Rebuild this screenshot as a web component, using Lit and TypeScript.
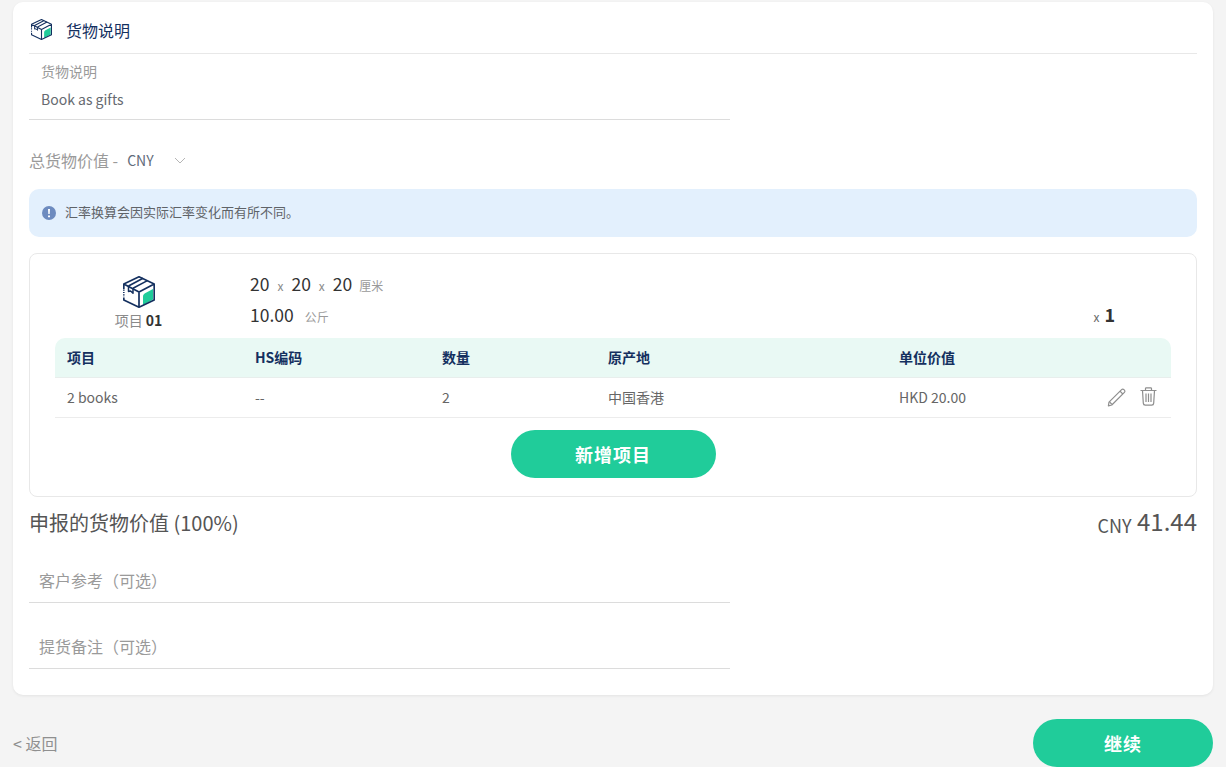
import { LitElement, html, css } from "lit";
import { customElement } from "lit/decorators.js";

const box = (size: number) => html`<svg width=${size} height=${size} viewBox="0 0 32 32" fill="none">
  <path d="M22 17.2 L30 13 V23.6 L20 29 V20.6 C20 19 20.6 18 22 17.2Z" fill="#20cc9a"/>
  <path d="M.8 13 V8 L16 .8 L31.2 8 V24 L16 31.2 L.8 24 V21.5 M.8 8 L16 16 L31.2 8 M16 16 V31.2" stroke="#14305f" stroke-width="1.7" stroke-linejoin="round"/>
  <path d="M5.5 10 L20 2.2 M10 12.2 L24.4 4.6" stroke="#14305f" stroke-width="1.6"/>
  <path d="M5.5 10 V15.4 L7.6 15 L10 17.2 V12.2" stroke="#14305f" stroke-width="1.5" stroke-linejoin="round"/>
  <path d="M.8 13.5 V21" stroke="#14305f" stroke-width="1.6" stroke-dasharray="1.2 1.2"/>
</svg>`;

@customElement("app-root")
export class AppRoot extends LitElement {
  static styles = css`
    :host {
      display: block;
      height: 767px;
      overflow: hidden;
      background: #f4f4f4;
      font-family: "Noto Sans CJK SC", "Noto Sans", sans-serif;
      color: #5c5c5c;
      padding: 2px 13px 0;
      box-sizing: border-box;
    }
    * { box-sizing: border-box; }
    .card {
      background: #fff;
      border-radius: 10px;
      height: 693px;
      padding: 0 16px;
      box-shadow: 0 1px 3px rgba(0,0,0,.07);
    }
    .head {
      height: 52px;
      border-bottom: 1px solid #e8e8e8;
      display: flex;
      align-items: center;
      padding: 4px 0 0 2px;
      color: #14305f;
      font-size: 16px;
      gap: 14px;
    }
    .desc {
      width: 701px;
      height: 66px;
      border-bottom: 1px solid #dcdcdc;
      padding: 8px 12px 0;
    }
    .desc .lbl { font-size: 14px; line-height: 19px; color: #9a9a9a; }
    .desc .val { font-size: 14px; line-height: 20px; margin-top: 8px; color: #666a70; }
    .total {
      height: 20px;
      margin-top: 30px;
      display: flex;
      align-items: center;
      font-size: 16px;
      color: #9a9a9a;
    }
    .total .cur { font-size: 14px; color: #5f6b7a; margin-left: 9px; width: 47px; }
    .info {
      margin-top: 19px;
      height: 48px;
      border-radius: 10px;
      background: #e3f0fd;
      display: flex;
      align-items: center;
      padding-left: 13px;
      gap: 9px;
      font-size: 13px;
      color: #5f6368;
    }
    .info span { padding-bottom: 4px; }
    .box {
      margin-top: 16px;
      height: 244px;
      border: 1px solid #e8e8e8;
      border-radius: 8px;
      padding: 0 25px;
    }
    .top { display: flex; height: 84px; }
    .itemcol {
      width: 167px;
      padding: 22px 0 0 0;
      display: flex;
      flex-direction: column;
      align-items: center;
      gap: 3px;
      font-size: 14px;
      line-height: 18px;
      color: #8a8a8a;
    }
    .itemcol b { color: #333; font-weight: 700; }
    .dims { margin-left: 28px; padding-top: 18px; flex: 1; color: #333; }
    .dimrow { display: flex; align-items: baseline; font-size: 17.5px; line-height: 24px; height: 24px; }
    .dimrow + .dimrow { margin-top: 7px; }
    .x { font-size: 12px; color: #8a8a8a; margin: 0 8px; }
    .unit { font-size: 12px; color: #9a9a9a; margin-left: 7px; }
    .dimrow.w .unit { margin-left: 11px; }
    .qty {
      align-self: flex-end;
      display: flex;
      align-items: baseline;
      margin-right: 56px;
      padding-bottom: 12px;
      font-size: 12px;
      color: #6a6a6a;
      gap: 5px;
    }
    .qty b { font-size: 18px; line-height: 24px; color: #333; font-weight: 700; }
    .row {
      display: grid;
      grid-template-columns: 188px 187px 166px 291px 1fr;
      align-items: center;
      padding-left: 12px;
      padding-bottom: 2px;
      font-size: 14px;
    }
    .thead {
      height: 40px;
      background: #e9f9f4;
      border-radius: 10px 10px 0 0;
      border-bottom: 1px solid #e8eeec;
      font-size: 14px;
      font-weight: 700;
      color: #14305f;
    }
    .tbody { height: 40px; border-bottom: 1px solid #ececec; color: #666; font-size: 14px; }
    .valcell { display: flex; justify-content: space-between; align-items: center; }
    .acts { display: flex; justify-content: flex-end; align-items: center; gap: 13px; padding-right: 14px; }
    .addwrap { display: flex; justify-content: center; margin-top: 12px; }
    .btn {
      background: #20cc9a;
      color: #fff;
      border-radius: 24px;
      height: 48px;
      display: flex;
      align-items: center;
      justify-content: center;
      font-weight: 700;
      font-size: 18px;
      letter-spacing: 1px;
      width: 205px;
    }
    .declared {
      display: flex;
      justify-content: space-between;
      align-items: baseline;
      margin-top: 8px;
      line-height: 32px;
      height: 34px;
      font-size: 20px;
      color: #555;
    }
    .declared .amt { font-size: 24px; }
    .declared .amt small { font-size: 18px; vertical-align: -2px; }
    .opt {
      width: 701px;
      height: 47px;
      border-bottom: 1px solid #dcdcdc;
      font-size: 16px;
      line-height: 24px;
      color: #9a9a9a;
      padding: 12px 10px 0;
    }
    .opt.first { margin-top: 17px; }
    .opt.second { margin-top: 19px; }
    .foot {
      display: flex;
      justify-content: space-between;
      align-items: center;
      margin-top: 24px;
    }
    .back { font-size: 16px; color: #8f8f8f; }
    .foot .btn { width: 180px; }
  `;

  render() {
    return html`
      <div class="card">
        <div class="head">${box(21)}<span>货物说明</span></div>
        <div class="desc">
          <div class="lbl">货物说明</div>
          <div class="val">Book as gifts</div>
        </div>
        <div class="total">
          <span>总货物价值 -</span><span class="cur">CNY</span>
          <svg width="12" height="7" viewBox="0 0 12 7" fill="none"><path d="M1 1l5 5 5-5" stroke="#b5b5b5" stroke-width="1"/></svg>
        </div>
        <div class="info">
          <svg width="14" height="14" viewBox="0 0 14 14"><circle cx="7" cy="7" r="7" fill="#6d8bbf"/><path d="M6 3h2l-.3 5H6.3z M6 9.4h2v1.8H6z" fill="#fff"/></svg>
          <span>汇率换算会因实际汇率变化而有所不同。</span>
        </div>
        <div class="box">
          <div class="top">
            <div class="itemcol">${box(32)}<span>项目 <b>01</b></span></div>
            <div class="dims">
              <div class="dimrow"><span>20</span><span class="x">x</span><span>20</span><span class="x">x</span><span>20</span><span class="unit">厘米</span></div>
              <div class="dimrow w"><span>10.00</span><span class="unit">公斤</span></div>
            </div>
            <div class="qty"><span>x</span><b>1</b></div>
          </div>
          <div class="row thead"><span>项目</span><span>HS编码</span><span>数量</span><span>原产地</span><span>单位价值</span></div>
          <div class="row tbody">
            <span>2 books</span><span>--</span><span>2</span><span>中国香港</span>
            <div class="valcell">
              <span>HKD 20.00</span>
              <div class="acts">
                <svg width="20" height="20" viewBox="0 0 20 20" fill="none" stroke="#8e8e8e" stroke-width="1.2" stroke-linejoin="round"><path d="M2 15.2 14.6 2.6a1.6 1.6 0 0 1 2.3 0l.5.5a1.6 1.6 0 0 1 0 2.3L4.8 18 1.4 18.8z"/><path d="M13 4.2 15.8 7M2.6 15 5 17.4"/></svg>
                <svg width="17" height="19" viewBox="0 0 17 19" fill="none" stroke="#8e8e8e" stroke-width="1.2"><path d="M.5 3.5h16M5.5 3.5V1.6q0-.8.8-.8h4.4q.8 0 .8.8v1.9M2.5 3.5l.8 12.6q.1 2 2 2h6.4q1.9 0 2-2l.8-12.6M6 6.5v8.5M8.5 6.5v8.5M11 6.5v8.5"/></svg>
              </div>
            </div>
          </div>
          <div class="addwrap"><div class="btn">新增项目</div></div>
        </div>
        <div class="declared"><span>申报的货物价值 (100%)</span><span class="amt"><small>CNY</small> 41.44</span></div>
        <div class="opt first">客户参考（可选）</div>
        <div class="opt second">提货备注（可选）</div>
      </div>
      <div class="foot"><span class="back">&lt; 返回</span><div class="btn">继续</div></div>
    `;
  }
}
